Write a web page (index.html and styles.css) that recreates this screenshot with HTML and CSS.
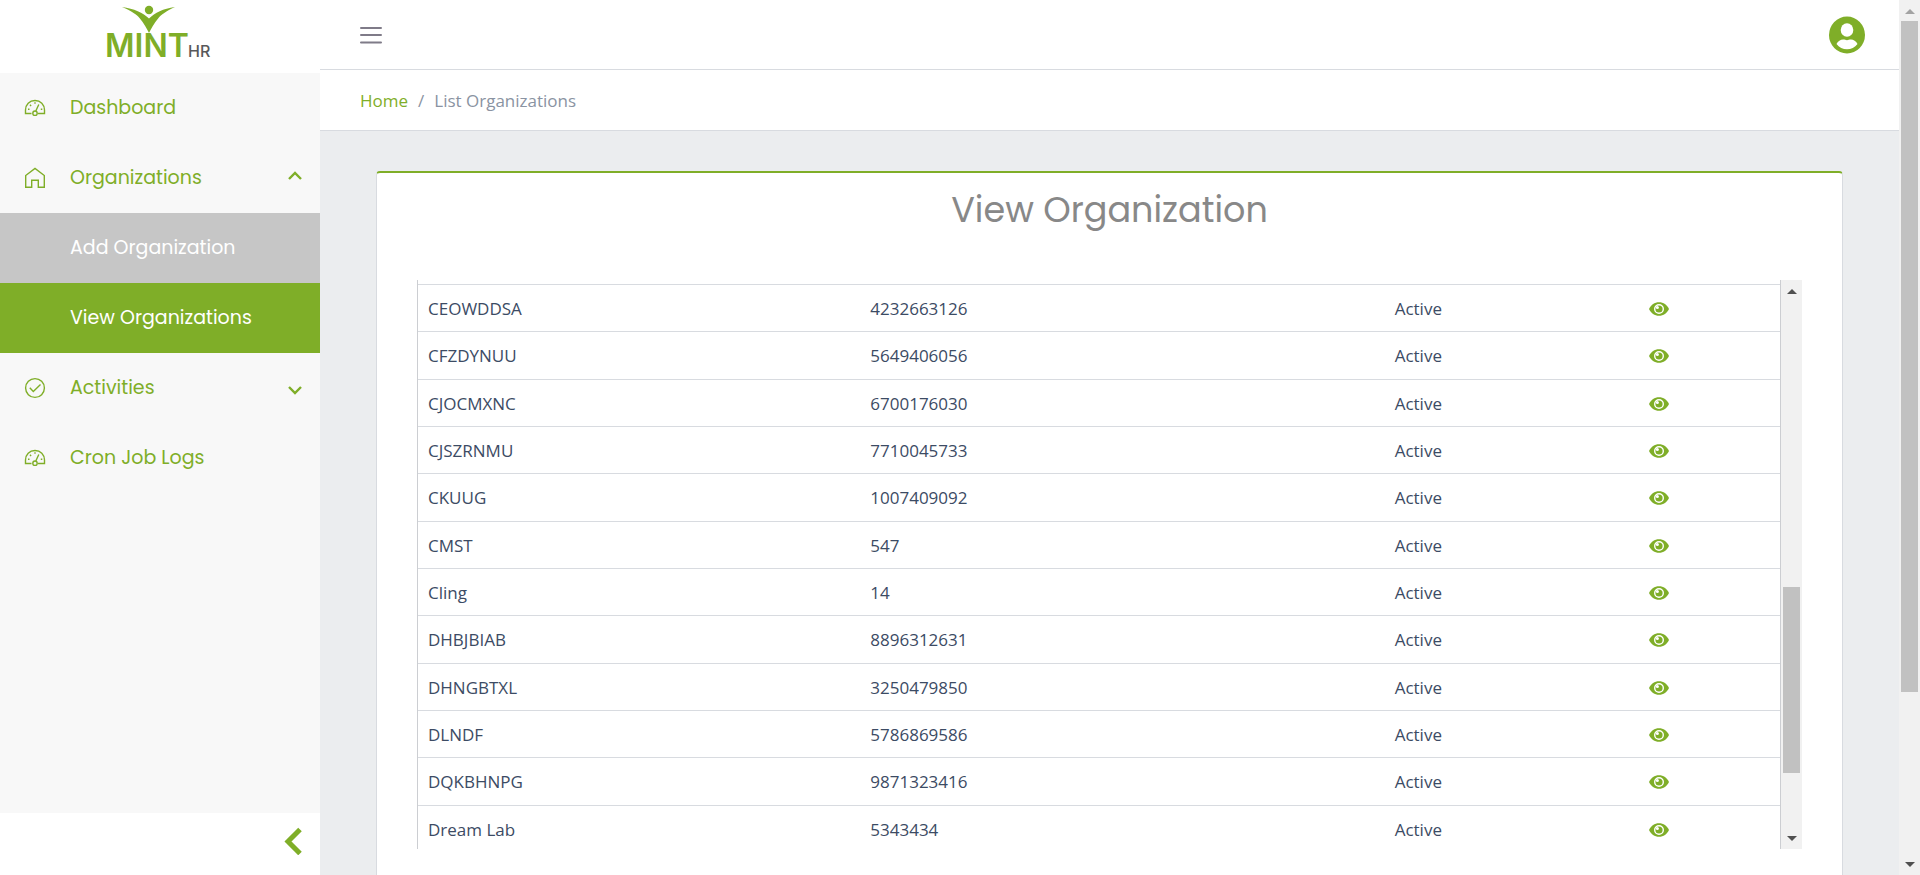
FILE: index.html
```html
<!DOCTYPE html>
<html lang="en">
<head>
<meta charset="utf-8">
<title>Mint HR - View Organization</title>
<link rel="stylesheet" href="styles.css">
</head>
<body>
<svg class="defs" aria-hidden="true">
  <symbol id="gauge" viewBox="0 0 22 18">
    <path d="M7.500 14.500H1.500V11C1.500 5.500 5.500 1.500 11 1.500S20.500 5.500 20.500 11V14.500H14" fill="none" stroke="currentColor" stroke-width="1.400"/>
    <circle cx="11" cy="14.200" r="2.200" fill="none" stroke="currentColor" stroke-width="1.400"/>
    <path d="M11.800 12L14.800 5.500M4 10.300h1.500M16.800 10.300h1.500M6 5.800l1.100 1.100M11 3.200v1.600" fill="none" stroke="currentColor" stroke-width="1.400"/>
  </symbol>
  <symbol id="home" viewBox="0 0 22 22">
    <path d="M1.700 20.300V8.500L11 1.500L20.300 8.500V20.300H14.300V13.200H7.700V20.300Z" fill="none" stroke="currentColor" stroke-width="1.400"/>
  </symbol>
  <symbol id="check" viewBox="0 0 22 22">
    <circle cx="11" cy="11" r="9.400" fill="none" stroke="currentColor" stroke-width="1.400"/>
    <path d="M5.800 10.800L9.300 14.500L16.500 7.500" fill="none" stroke="currentColor" stroke-width="1.400"/>
  </symbol>
  <symbol id="chevron" viewBox="0 0 14 14">
    <path d="M1 6L7 12L13 6" fill="none" stroke="currentColor" stroke-width="2.400"/>
  </symbol>
  <symbol id="eye" viewBox="0 0 20 14">
    <path d="M10 0.200C5.500 0.200 2 2.800 0 7C2 11.200 5.500 13.800 10 13.800S18 11.200 20 7C18 2.800 14.500 0.200 10 0.200Z" fill="currentColor"/>
    <circle cx="10" cy="7" r="4.300" fill="none" stroke="#fff" stroke-width="1.400"/>
    <circle cx="8.400" cy="5.400" r="1.500" fill="#fff"/>
  </symbol>
</svg>
<div class="app">
  <aside class="sidebar">
    <a class="brand" href="#" aria-label="Mint HR">
      <svg class="logo" viewBox="0 0 120 68">
        <circle class="logo-green" cx="49" cy="10" r="4.200"/>
        <path class="logo-green" d="M22 7C34 8.500 43 13 49 18.500C55 13 63 8.500 75 7C66 11 61 15 58.500 18C54 23 51 29 49 33C47 29 44 23 39.500 18C37 15 32 11 22 7Z"/>
        <text class="logo-mint" x="5" y="57">MINT</text>
        <text class="logo-hr" x="88" y="57">HR</text>
      </svg>
    </a>
    <nav class="nav">
      <a class="nav-item" href="#"><svg class="icon gauge"><use href="#gauge"/></svg><span>Dashboard</span></a>
      <a class="nav-item" href="#"><svg class="icon"><use href="#home"/></svg><span>Organizations</span><svg class="chevron open"><use href="#chevron"/></svg></a>
      <a class="nav-item sub" href="#"><span>Add Organization</span></a>
      <a class="nav-item sub active" href="#"><span>View Organizations</span></a>
      <a class="nav-item" href="#"><svg class="icon"><use href="#check"/></svg><span>Activities</span><svg class="chevron"><use href="#chevron"/></svg></a>
      <a class="nav-item" href="#"><svg class="icon gauge"><use href="#gauge"/></svg><span>Cron Job Logs</span></a>
    </nav>
    <button class="minimizer" type="button" aria-label="Collapse sidebar">
      <svg class="back" viewBox="0 0 18 28"><path d="M16 2.500L4 14.500L16 26.500" fill="none" stroke="currentColor" stroke-width="5"/></svg>
    </button>
  </aside>

  <div class="main">
    <header class="header">
      <button class="toggler" type="button" aria-label="Toggle menu">
        <svg class="bars" viewBox="0 0 22 18"><path d="M1 2H21M1 9H21M1 16.500H21" stroke="currentColor" stroke-width="2" stroke-linecap="round"/></svg>
      </button>
      <button class="account" type="button" aria-label="Account">
        <svg class="avatar" viewBox="0 0 36 38">
          <ellipse cx="18" cy="19" rx="18" ry="18.500" fill="currentColor"/>
          <ellipse cx="18" cy="14" rx="6.300" ry="6.700" fill="#fff"/>
          <path d="M7.500 28C9 25 11.500 23.500 14 23.500C16 23.500 16.500 24.200 18 24.200S20 23.500 22 23.500C24.500 23.500 27 25 28.500 28C26 31.500 22 33.200 18 33.200S10 31.500 7.500 28Z" fill="#fff"/>
        </svg>
      </button>
    </header>
    <nav class="breadcrumb" aria-label="Breadcrumb">
      <a href="#">Home</a><span class="slash">/</span><span>List Organizations</span>
    </nav>
    <main class="content">
      <section class="card">
        <h1 class="title">View Organization</h1>
        <div class="scroller">
          <div class="viewport">
            <table class="table">
              <colgroup><col class="c-name"><col class="c-number"><col class="c-status"><col class="c-view"></colgroup>
              <tbody>
                <tr><td>CEOWDDSA</td><td>4232663126</td><td>Active</td><td><a href="#" aria-label="View"><svg class="eye"><use href="#eye"/></svg></a></td></tr>
                <tr><td>CFZDYNUU</td><td>5649406056</td><td>Active</td><td><a href="#" aria-label="View"><svg class="eye"><use href="#eye"/></svg></a></td></tr>
                <tr><td>CJOCMXNC</td><td>6700176030</td><td>Active</td><td><a href="#" aria-label="View"><svg class="eye"><use href="#eye"/></svg></a></td></tr>
                <tr><td>CJSZRNMU</td><td>7710045733</td><td>Active</td><td><a href="#" aria-label="View"><svg class="eye"><use href="#eye"/></svg></a></td></tr>
                <tr><td>CKUUG</td><td>1007409092</td><td>Active</td><td><a href="#" aria-label="View"><svg class="eye"><use href="#eye"/></svg></a></td></tr>
                <tr><td>CMST</td><td>547</td><td>Active</td><td><a href="#" aria-label="View"><svg class="eye"><use href="#eye"/></svg></a></td></tr>
                <tr><td>Cling</td><td>14</td><td>Active</td><td><a href="#" aria-label="View"><svg class="eye"><use href="#eye"/></svg></a></td></tr>
                <tr><td>DHBJBIAB</td><td>8896312631</td><td>Active</td><td><a href="#" aria-label="View"><svg class="eye"><use href="#eye"/></svg></a></td></tr>
                <tr><td>DHNGBTXL</td><td>3250479850</td><td>Active</td><td><a href="#" aria-label="View"><svg class="eye"><use href="#eye"/></svg></a></td></tr>
                <tr><td>DLNDF</td><td>5786869586</td><td>Active</td><td><a href="#" aria-label="View"><svg class="eye"><use href="#eye"/></svg></a></td></tr>
                <tr><td>DQKBHNPG</td><td>9871323416</td><td>Active</td><td><a href="#" aria-label="View"><svg class="eye"><use href="#eye"/></svg></a></td></tr>
                <tr><td>Dream Lab</td><td>5343434</td><td>Active</td><td><a href="#" aria-label="View"><svg class="eye"><use href="#eye"/></svg></a></td></tr>
              </tbody>
            </table>
          </div>
          <div class="scrollbar table-bar"><span class="arrow up"></span><div class="track"><span class="before"></span><span class="thumb"></span><span class="after"></span></div><span class="arrow down"></span></div>
        </div>
      </section>
    </main>
  </div>
  <div class="scrollbar page-bar"><span class="arrow up muted"></span><div class="track"><span class="before"></span><span class="thumb"></span><span class="after"></span></div><span class="arrow down"></span></div>
</div>
</body>
</html>
```

FILE: styles.css
```css
:root {
  --green: #7fae28;
  --line: #d8dbe0;
  --ink: #3c4b64;
}
* { box-sizing: border-box; }
body {
  margin: 0;
  font: 17px/26px "Segoe UI", "Open Sans", "Noto Sans", sans-serif;
  color: var(--ink);
  background: #ebedef;
}
a { color: inherit; text-decoration: none; }
button { padding: 0; border: 0; background: none; color: inherit; cursor: pointer; }
svg { display: block; flex: none; }
.defs { position: absolute; width: 0; height: 0; }
.app { display: flex; height: 100vh; overflow: hidden; }

.sidebar { display: flex; flex-direction: column; flex: 0 0 320px; background: #f8f8f8; color: var(--green); }
.brand { display: flex; justify-content: center; height: 73px; background: #fff; }
.logo { width: 120px; height: 68px; overflow: visible; }
.logo-green { fill: var(--green); }
.logo-mint { font: 600 32px Inter, sans-serif; fill: var(--green); }
.logo-hr { font: 500 16px Inter, sans-serif; fill: #58585a; }
.nav { flex: 1; font-family: Poppins, Inter, sans-serif; font-size: 19px; }
.nav-item { display: flex; align-items: center; height: 70px; padding: 0 18px 0 24px; }
.nav-item span { flex: 1; padding-bottom: 1px; }
.icon { width: 22px; height: 22px; margin-right: 24px; }
.icon.gauge { height: 18px; }
.nav-item.sub { padding-left: 70px; background: #c6c6c6; color: #fff; }
.nav-item.active { background: var(--green); }
.chevron { width: 14px; height: 14px; }
.chevron.open { transform: rotate(180deg); }
.minimizer { display: flex; align-items: center; justify-content: flex-end; height: 62px; padding: 0 18px 6px; background: #fff; }
.back { width: 18px; height: 28px; }

.main { flex: 1; min-width: 0; }
.header { display: flex; align-items: center; justify-content: space-between; height: 70px; padding: 0 34px 0 40px; background: #fff; border-bottom: 1px solid var(--line); color: #7f7b88; }
.bars { width: 22px; height: 18px; }
.account { color: var(--green); }
.avatar { width: 36px; height: 38px; }
.breadcrumb { display: flex; align-items: center; gap: 10px; height: 61px; padding: 1px 40px 0; background: #fff; border-bottom: 1px solid var(--line); color: #8a93a2; }
.breadcrumb a { color: var(--green); }

.content { padding: 40px 56px; }
.card { min-height: 760px; padding: 13px 40px; background: #fff; border: 1px solid var(--line); border-top: 2px solid var(--green); border-radius: 4px; }
.title { margin: 0 0 46px; font: 400 35px/48px Poppins, Inter, sans-serif; text-align: center; color: #888; }
.scroller { display: flex; height: 569px; overflow: hidden; }
.viewport { flex: 1; height: 573px; padding-top: 4px; border: solid #ccced2; border-width: 0 1px; }
.table { width: 100%; height: 568px; border-collapse: separate; border-spacing: 0; table-layout: fixed; }
.table td { padding: 2px 10px 0; border-top: 1px solid var(--line); vertical-align: middle; }
.table td + td { padding-left: 11px; }
.c-name { width: 32.4%; }
.c-number { width: 38.5%; }
.c-status { width: 18.7%; }
.c-view { width: 10.4%; }
.table a { display: block; color: var(--green); }
.eye { width: 20px; height: 14px; }

.scrollbar { display: flex; flex-direction: column; flex: 0 0 21px; background: #f1f1f1; }
.arrow { display: flex; align-items: center; justify-content: center; height: 21px; padding-top: 2px; color: #505050; }
.arrow::before { content: ""; border: 5px solid transparent; border-top-width: 0; border-bottom: 5px solid currentColor; }
.arrow.down { padding: 0; }
.arrow.down::before { transform: rotate(180deg); }
.arrow.muted { color: #a3a3a3; }
.track { display: flex; flex-direction: column; flex: 1; padding: 0 2px; }
.thumb { background: #c1c1c1; }
.page-bar .thumb { flex: 671; }
.page-bar .after { flex: 162; }
.table-bar .before { flex: 286; }
.table-bar .thumb { flex: 186; }
.table-bar .after { flex: 55; }
```
